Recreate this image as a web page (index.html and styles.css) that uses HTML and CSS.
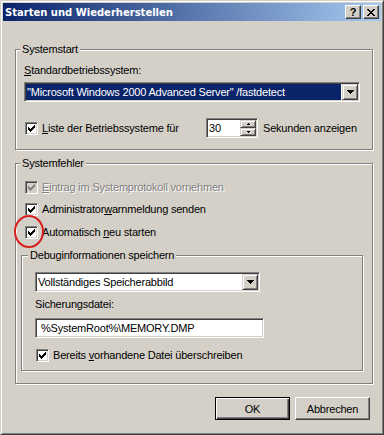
FILE: index.html
```html
<!DOCTYPE html>
<html lang="de">
<head>
  <meta charset="UTF-8" />
  <title>Starten und Wiederherstellen</title>
  <link rel="stylesheet" href="styles.css">
</head>
<body>
  <div class="window">
    <div class="titlebar">
      <span class="title">Starten und Wiederherstellen</span>
      <span class="caption-btns">
        <span class="cap-btn cap-help">?</span>
        <span class="cap-btn">
          <svg width="8" height="7" viewBox="0 0 8 7" shape-rendering="crispEdges"><path d="M0 0h2v1H0zM6 0h2v1H6zM1 1h2v1H1zM5 1h2v1H5zM2 2h4v1H2zM3 3h2v1H3zM2 4h4v1H2zM1 5h2v1H1zM5 5h2v1H5zM0 6h2v1H0zM6 6h2v1H6z" fill="#000"/></svg>
        </span>
      </span>
    </div>

    <div class="dialog">
      <div class="group group-start">
        <div class="group-title">Systemstart</div>
        <div class="field-label label-os"><u>S</u>tandardbetriebssystem:</div>
        <div class="combo combo-os">
          <span class="combo-text selected">"Microsoft Windows 2000 Advanced Server" /fastdetect</span>
          <span class="combo-btn">
            <svg width="7" height="4" viewBox="0 0 7 4" shape-rendering="crispEdges"><path d="M0 0h7v1H0zM1 1h5v1H1zM2 2h3v1H2zM3 3h1v1H3z" fill="#000"/></svg>
          </span>
        </div>
        <div class="timeout-row">
          <div class="check-row timeout-check">
            <span class="check"><svg width="7" height="7" viewBox="0 0 7 7" shape-rendering="crispEdges"><path d="M0 2h1v3H0zM1 3h1v3H1zM2 4h1v3H2zM3 3h1v3H3zM4 2h1v3H4zM5 1h1v3H5zM6 0h1v3H6z" fill="#000"/></svg></span>
            <span><u>L</u>iste der Betriebssysteme für</span>
          </div>
          <div class="spin">
            <span class="spin-value">30</span>
            <span class="spin-btns">
              <span class="spin-btn"><svg width="3" height="2" viewBox="0 0 3 2" shape-rendering="crispEdges"><path d="M1 0h1v1H1zM0 1h3v1H0z" fill="#000"/></svg></span>
              <span class="spin-btn"><svg width="3" height="2" viewBox="0 0 3 2" shape-rendering="crispEdges"><path d="M0 0h3v1H0zM1 1h1v1H1z" fill="#000"/></svg></span>
            </span>
          </div>
          <span class="spin-after">Sekunden anzeigen</span>
        </div>
      </div>

      <div class="group group-error">
        <div class="group-title">Systemfehler</div>
        <div class="check-row row-log disabled">
          <span class="check"><svg width="7" height="7" viewBox="0 0 7 7" shape-rendering="crispEdges"><path d="M0 2h1v3H0zM1 3h1v3H1zM2 4h1v3H2zM3 3h1v3H3zM4 2h1v3H4zM5 1h1v3H5zM6 0h1v3H6z" fill="#808080"/></svg></span>
          <span><u>E</u>intrag im Systemprotokoll vornehmen</span>
        </div>
        <div class="check-row row-alert">
          <span class="check"><svg width="7" height="7" viewBox="0 0 7 7" shape-rendering="crispEdges"><path d="M0 2h1v3H0zM1 3h1v3H1zM2 4h1v3H2zM3 3h1v3H3zM4 2h1v3H4zM5 1h1v3H5zM6 0h1v3H6z" fill="#000"/></svg></span>
          <span>Administrator<u>w</u>arnmeldung senden</span>
        </div>
        <div class="check-row row-restart">
          <span class="check"><svg width="7" height="7" viewBox="0 0 7 7" shape-rendering="crispEdges"><path d="M0 2h1v3H0zM1 3h1v3H1zM2 4h1v3H2zM3 3h1v3H3zM4 2h1v3H4zM5 1h1v3H5zM6 0h1v3H6z" fill="#000"/></svg></span>
          <span>Automatisch <u>n</u>eu starten</span>
          <span class="marker"></span>
        </div>

        <div class="group group-debug">
          <div class="group-title">Debuginformationen speichern</div>
          <div class="combo combo-dump">
            <span class="combo-text">Vollständiges Speicherabbild</span>
            <span class="combo-btn">
              <svg width="7" height="4" viewBox="0 0 7 4" shape-rendering="crispEdges"><path d="M0 0h7v1H0zM1 1h5v1H1zM2 2h3v1H2zM3 3h1v1H3z" fill="#000"/></svg>
            </span>
          </div>
          <div class="field-label label-file">Sicherungsdatei:</div>
          <div class="textbox">%SystemRoot%\MEMORY.DMP</div>
          <div class="check-row row-overwrite">
            <span class="check"><svg width="7" height="7" viewBox="0 0 7 7" shape-rendering="crispEdges"><path d="M0 2h1v3H0zM1 3h1v3H1zM2 4h1v3H2zM3 3h1v3H3zM4 2h1v3H4zM5 1h1v3H5zM6 0h1v3H6z" fill="#000"/></svg></span>
            <span>Bereits <u>v</u>orhandene Datei überschreiben</span>
          </div>
        </div>
      </div>

      <div class="buttons">
        <span class="push default">OK</span>
        <span class="push">Abbrechen</span>
      </div>
    </div>
  </div>
</body>
</html>
```

FILE: styles.css
```css
* {
  box-sizing: border-box;
}

body {
  margin: 0;
  font-family: "Liberation Sans", Arial, sans-serif;
  font-size: 11px;
  letter-spacing: -0.2px;
  color: #000;
  background: #d4d0c8;
}

.window {
  width: 384px;
  height: 435px;
  background: #d4d0c8;
  border: 1px solid;
  border-color: #d4d0c8 #404040 #404040 #d4d0c8;
  box-shadow: inset 1px 1px #fff, inset -1px -1px #808080;
  padding: 2px;
}

/* title bar */
.titlebar {
  height: 18px;
  display: flex;
  align-items: center;
  padding: 0 2px;
  background: linear-gradient(to right, #0a246a, #a6caf0);
}

.title {
  color: #fff;
  font-family: "DejaVu Sans", Verdana, sans-serif;
  font-weight: bold;
  font-size: 10px;
  letter-spacing: 0;
  line-height: 13px;
}

.caption-btns {
  margin-left: auto;
  display: flex;
  gap: 2px;
}

.cap-btn {
  width: 16px;
  height: 14px;
  display: flex;
  align-items: center;
  justify-content: center;
  background: #d4d0c8;
  border: 1px solid;
  border-color: #fff #404040 #404040 #fff;
  box-shadow: inset -1px -1px #808080;
}

.cap-help {
  font-weight: bold;
  font-size: 11px;
  line-height: 12px;
  padding-bottom: 1px;
}

/* group boxes */
.group {
  border: 1px solid #808080;
  box-shadow: inset 1px 1px #fff, 1px 1px #fff;
}

.group-title {
  display: table;
  margin-top: -7px;
  padding: 0 2px;
  line-height: 13px;
  background: #d4d0c8;
}

.group-start {
  margin: 28px 8px 0 12px;
  padding: 0 12px 11px 8px;
}

.group-start .group-title {
  margin-left: -4px;
}

.group-error {
  margin: 13px 8px 0 12px;
  padding: 0 9px 12px 5px;
}

.group-error .group-title {
  margin-left: -1px;
}

.group-debug {
  margin-top: 16px;
  padding: 0 8px 8px 13px;
}

.group-debug .group-title {
  margin-left: -7px;
}

.field-label {
  line-height: 13px;
}

.label-os {
  margin-top: 8px;
}

.label-file {
  margin-top: 6px;
}

/* sunken fields */
.combo, .textbox, .spin {
  height: 20px;
  background: #fff;
  border: 1px solid;
  border-color: #808080 #fff #fff #808080;
  box-shadow: inset 1px 1px #404040, inset -1px -1px #d4d0c8;
  padding: 1px;
  display: flex;
}

.combo-os {
  margin-top: 5px;
}

.combo-dump {
  margin-top: 10px;
  width: 225px;
}

.combo-text {
  flex: 1;
  line-height: 16px;
  padding-left: 1px;
  white-space: nowrap;
  overflow: hidden;
}

.combo-text.selected {
  background: #0a246a;
  color: #fff;
  margin-right: 1px;
}

.combo-btn, .spin-btn {
  display: flex;
  align-items: center;
  justify-content: center;
  background: #d4d0c8;
  border: 1px solid;
  border-color: #d4d0c8 #404040 #404040 #d4d0c8;
  box-shadow: inset 1px 1px #fff, inset -1px -1px #808080;
}

.combo-btn {
  width: 16px;
  height: 16px;
}

.textbox {
  margin-top: 7px;
  width: 229px;
  line-height: 16px;
  padding-left: 5px;
}

/* checkboxes */
.check-row {
  display: flex;
  align-items: center;
  gap: 4px;
  line-height: 13px;
  white-space: nowrap;
}

.check {
  width: 13px;
  height: 13px;
  flex: none;
  display: flex;
  align-items: center;
  justify-content: center;
  background: #fff;
  border: 1px solid;
  border-color: #808080 #fff #fff #808080;
  box-shadow: inset 1px 1px #404040, inset -1px -1px #d4d0c8;
}

.disabled {
  color: #808080;
  text-shadow: 1px 1px 0 #fff;
}

.disabled .check {
  background: #d4d0c8;
}

.row-log {
  margin: 11px 0 0 4px;
}

.row-alert {
  margin: 9px 0 0 4px;
}

.row-restart {
  margin: 10px 0 0 4px;
  position: relative;
}

.marker {
  position: absolute;
  left: -11px;
  top: -11px;
  width: 30px;
  height: 33px;
  border: 2px solid #d81e1e;
  border-radius: 50%;
}

.row-overwrite {
  margin: 11px 0 0 1px;
}

/* timeout row */
.timeout-row {
  margin-top: 16px;
  display: flex;
  align-items: center;
  padding-left: 1px;
}

.timeout-check {
  width: 181px;
  flex: none;
}

.spin {
  width: 52px;
  flex: none;
}

.spin-value {
  flex: 1;
  line-height: 16px;
  padding-left: 1px;
}

.spin-btns {
  display: flex;
  flex-direction: column;
  width: 16px;
}

.spin-btn {
  height: 8px;
}

.spin-after {
  margin-left: 5px;
  white-space: nowrap;
}

/* dialog buttons */
.buttons {
  margin-top: 13px;
  display: flex;
  justify-content: flex-end;
  gap: 5px;
  padding-right: 11px;
}

.push {
  width: 75px;
  height: 23px;
  display: flex;
  align-items: center;
  justify-content: center;
  background: #d4d0c8;
  border: 1px solid;
  border-color: #fff #404040 #404040 #fff;
  box-shadow: inset -1px -1px #808080;
}

.push.default {
  border-color: #000;
  box-shadow: inset 1px 1px #fff, inset -1px -1px #404040, inset -2px -2px #808080;
}
```
